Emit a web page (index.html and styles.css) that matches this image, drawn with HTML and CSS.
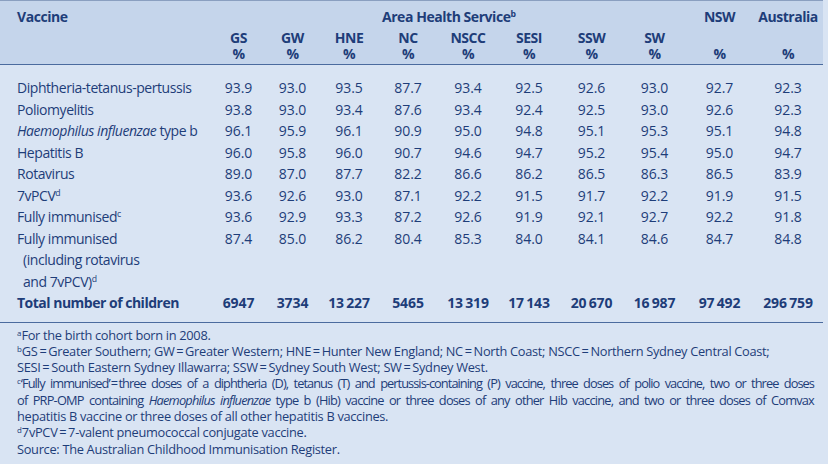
FILE: index.html
```html
<!DOCTYPE html>
<html>
<head>
<meta charset="utf-8">
<link rel="stylesheet" href="styles.css">
</head>
<body>
<div class="page">
  <table class="tbl">
    <colgroup>
      <col class="c-lbl"><col class="c-gs"><col class="c-gw"><col class="c-hne"><col class="c-nc"><col class="c-nscc"><col class="c-sesi"><col class="c-ssw"><col class="c-sw"><col class="c-nsw"><col class="c-aus">
    </colgroup>
    <thead>
      <tr class="h1">
        <th class="lbl" rowspan="2">Vaccine</th>
        <th colspan="8">Area Health Service<sup>b</sup></th>
        <th>NSW</th>
        <th>Australia</th>
      </tr>
      <tr class="h2">
        <th>GS<br>%</th><th>GW<br>%</th><th>HNE<br>%</th><th>NC<br>%</th><th>NSCC<br>%</th><th>SESI<br>%</th><th>SSW<br>%</th><th>SW<br>%</th><th>%</th><th>%</th>
      </tr>
    </thead>
    <tbody>
      <tr class="first"><td class="lbl">Diphtheria-tetanus-pertussis</td><td>93.9</td><td>93.0</td><td>93.5</td><td>87.7</td><td>93.4</td><td>92.5</td><td>92.6</td><td>93.0</td><td>92.7</td><td>92.3</td></tr>
      <tr><td class="lbl">Poliomyelitis</td><td>93.8</td><td>93.0</td><td>93.4</td><td>87.6</td><td>93.4</td><td>92.4</td><td>92.5</td><td>93.0</td><td>92.6</td><td>92.3</td></tr>
      <tr><td class="lbl"><i>Haemophilus influenzae</i> type b</td><td>96.1</td><td>95.9</td><td>96.1</td><td>90.9</td><td>95.0</td><td>94.8</td><td>95.1</td><td>95.3</td><td>95.1</td><td>94.8</td></tr>
      <tr><td class="lbl">Hepatitis B</td><td>96.0</td><td>95.8</td><td>96.0</td><td>90.7</td><td>94.6</td><td>94.7</td><td>95.2</td><td>95.4</td><td>95.0</td><td>94.7</td></tr>
      <tr><td class="lbl">Rotavirus</td><td>89.0</td><td>87.0</td><td>87.7</td><td>82.2</td><td>86.6</td><td>86.2</td><td>86.5</td><td>86.3</td><td>86.5</td><td>83.9</td></tr>
      <tr><td class="lbl">7vPCV<sup>d</sup></td><td>93.6</td><td>92.6</td><td>93.0</td><td>87.1</td><td>92.2</td><td>91.5</td><td>91.7</td><td>92.2</td><td>91.9</td><td>91.5</td></tr>
      <tr><td class="lbl">Fully immunised<sup>c</sup></td><td>93.6</td><td>92.9</td><td>93.3</td><td>87.2</td><td>92.6</td><td>91.9</td><td>92.1</td><td>92.7</td><td>92.2</td><td>91.8</td></tr>
      <tr><td class="lbl hang">Fully immunised<br>(including rotavirus<br>and 7vPCV)<sup>d</sup></td><td>87.4</td><td>85.0</td><td>86.2</td><td>80.4</td><td>85.3</td><td>84.0</td><td>84.1</td><td>84.6</td><td>84.7</td><td>84.8</td></tr>
      <tr class="total"><td class="lbl">Total number of children</td><td>6947</td><td>3734</td><td>13&#8201;227</td><td>5465</td><td>13&#8201;319</td><td>17&#8201;143</td><td>20&#8201;670</td><td>16&#8201;987</td><td>97&#8201;492</td><td>296&#8201;759</td></tr>
    </tbody>
  </table>
  <div class="notes">
    <p><sup>a</sup>For the birth cohort born in 2008.</p>
    <p><sup>b</sup>GS&#8201;=&#8201;Greater Southern; GW&#8201;=&#8201;Greater Western; HNE&#8201;=&#8201;Hunter New England; NC&#8201;=&#8201;North Coast; NSCC&#8201;=&#8201;Northern Sydney Central Coast;</p>
    <p>SESI&#8201;=&#8201;South Eastern Sydney Illawarra; SSW&#8201;=&#8201;Sydney South West; SW&#8201;=&#8201;Sydney West.</p>
    <p class="just tight"><sup>c</sup>‘Fully immunised’&#8201;=&#8201;three doses of a diphtheria (D), tetanus (T) and pertussis-containing (P) vaccine, three doses of polio vaccine, two or three doses</p>
    <p class="just semi">of PRP-OMP containing <i>Haemophilus influenzae</i> type b (Hib) vaccine or three doses of any other Hib vaccine, and two or three doses of Comvax</p>
    <p>hepatitis B vaccine or three doses of all other hepatitis B vaccines.</p>
    <p><sup>d</sup>7vPCV&#8201;=&#8201;7-valent pneumococcal conjugate vaccine.</p>
    <p>Source: The Australian Childhood Immunisation Register.</p>
  </div>
</div>
</body>
</html>
```

FILE: styles.css
```css
* { box-sizing: border-box; }
html, body { margin: 0; padding: 0; }
body {
  width: 828px;
  height: 464px;
  overflow: hidden;
  background: #d9e4f3;
  font-family: "Open Sans", "Noto Sans", sans-serif;
  color: #1e3d79;
}
.page {
  width: 828px;
  height: 464px;
  background: #d9e4f3;
}
.tbl {
  border-collapse: collapse;
  table-layout: fixed;
  width: 823px;
  font-size: 14px;
}
.c-lbl { width: 212px; }
.c-gs { width: 53px; }
.c-gw { width: 55px; }
.c-hne { width: 58px; }
.c-nc { width: 60px; }
.c-nscc { width: 60px; }
.c-sesi { width: 62px; }
.c-ssw { width: 63px; }
.c-sw { width: 63px; }
.c-nsw { width: 67px; }
.c-aus { width: 70px; }

thead { background: #c5d5eb; }
.tbl th {
  font-weight: 700;
  text-align: center;
  padding: 0;
  line-height: 16px;
  vertical-align: top;
  letter-spacing: -0.45px;
}
.h1 th { padding-top: 8px; padding-bottom: 5px; border-top: 1px solid #8a9fc0; }
.h2 th { padding-bottom: 2px; vertical-align: bottom; border-bottom: 1px solid #4b6b9e; }
.tbl th.lbl { text-align: left; padding-left: 17px; border-bottom: 1px solid #4b6b9e; }

.tbl td {
  padding: 0;
  text-align: center;
  line-height: 21.5px;
  vertical-align: top;
  white-space: nowrap;
  letter-spacing: -0.1px;
}
.tbl td.lbl { text-align: left; padding-left: 17px; letter-spacing: -0.45px; }
.tbl td.hang { padding-left: 23px; text-indent: -6px; }
.first td { padding-top: 12px; }
.total td { font-weight: 700; padding-bottom: 8px; border-bottom: 1px solid #4b6b9e; }
.total td.lbl { letter-spacing: -0.5px; }

sup {
  font-size: 0.62em;
  line-height: 0;
  vertical-align: 0.55em;
  letter-spacing: 0;
}

.notes {
  width: 828px;
  padding: 4px 14px 0 17px;
  font-size: 12.8px;
  letter-spacing: -0.3px;
}
.notes p {
  margin: 0;
  line-height: 16.3px;
  white-space: nowrap;
}
.notes p.just {
  text-align: justify;
  text-align-last: justify;
  white-space: normal;
}
.notes .tight { letter-spacing: -0.95px; word-spacing: -1.2px; }
.notes .semi { letter-spacing: -0.8px; word-spacing: -1px; }
```
